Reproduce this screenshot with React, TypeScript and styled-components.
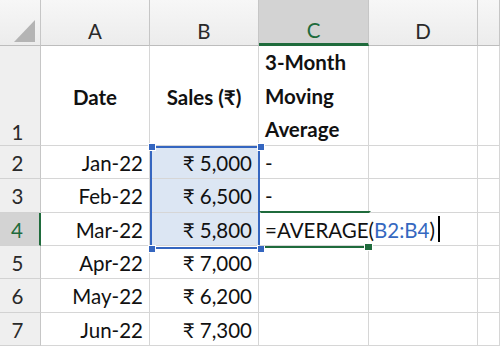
import styled, { createGlobalStyle } from 'styled-components';

const GlobalStyle = createGlobalStyle`
  html, body {
    margin: 0;
    padding: 0;
    background: #ffffff;
  }
  body {
    font-family: Lato, "Noto Sans", "DejaVu Sans", sans-serif;
  }
`;

type Row = {
	date: string
	sales: string
	avg?: string
};

const rows: Row[] = [
	{ date: 'Jan-22', sales: '₹ 5,000', avg: '-' },
	{ date: 'Feb-22', sales: '₹ 6,500', avg: '-' },
	{ date: 'Mar-22', sales: '₹ 5,800' },
	{ date: 'Apr-22', sales: '₹ 7,000' },
	{ date: 'May-22', sales: '₹ 6,200' },
	{ date: 'Jun-22', sales: '₹ 7,300' },
];

const columns = ['A', 'B', 'C', 'D', ''];

export default function App() {
	return (
		<>
			<GlobalStyle/>
			<Sheet>
				<Corner>
					<svg width="41" height="46" viewBox="0 0 41 46">
						<polygon points="14,42 35,42 35,20" fill="#b4b4b4"/>
					</svg>
				</Corner>
				{columns.map((c) => (
					<ColHeader key={c || 'E'} $active={c === 'C'}>{c}</ColHeader>
				))}

				<RowHeader $tall>1</RowHeader>
				<Cell $align="center" $bold>Date</Cell>
				<Cell $align="center" $bold>Sales (₹)</Cell>
				<Cell $bold $wrap>3-Month Moving Average</Cell>
				<Cell/>
				<Cell/>

				{rows.map((r, i) => {
					const n = i + 2;
					const editing = n === 4;
					return [
						<RowHeader key={`h${n}`} $active={editing}>{n}</RowHeader>,
						<Cell key={`a${n}`} $align="right">{r.date}</Cell>,
						<Cell key={`b${n}`} $align="right" $picked={n <= 4}>{r.sales}</Cell>,
						editing ? (
							<Cell key={`c${n}`} $overflow>
								<span>=AVERAGE(<Ref>B2:B4</Ref>)</span>
								<Caret/>
							</Cell>
						) : (
							<Cell key={`c${n}`}>{r.avg}</Cell>
						),
						<Cell key={`d${n}`}/>,
						<Cell key={`e${n}`}/>,
					];
				})}

				<RangeBox/>
				<Handle $x={150} $y={146}/>
				<Handle $x={259} $y={146}/>
				<Handle $x={150} $y={248}/>
				<Handle $x={259} $y={248}/>
				<ActiveBox/>
				<FillHandle/>
			</Sheet>
		</>
	);
}

const Sheet = styled.div`
  position: relative;
  width: 500px;
  height: 346px;
  overflow: hidden;
  display: grid;
  grid-template-columns: 41px 109px 109px 110px 109px 1fr;
  grid-template-rows: 46px 100px repeat(6, 33.33px);
  color: #111;
  font-size: 20.5px;
`;

const Corner = styled.div`
  background: linear-gradient(#f7f7f7, #ececec);
  border-right: 1px solid #c6c6c6;
  border-bottom: 1px solid #bdbdbd;
  box-sizing: border-box;
  svg { display: block; }
`;

const ColHeader = styled.div<{ $active?: boolean }>`
  box-sizing: border-box;
  display: flex;
  align-items: center;
  justify-content: center;
  padding-top: 16px;
  background: ${(p) => (p.$active ? '#d3d3d3' : 'linear-gradient(#f7f7f7, #ececec)')};
  color: ${(p) => (p.$active ? '#1f6b3c' : '#2a2a2a')};
  border-right: 1px solid #c6c6c6;
  border-bottom: ${(p) => (p.$active ? '3px solid #1f6b3c' : '1px solid #bdbdbd')};
`;

const RowHeader = styled.div<{ $active?: boolean; $tall?: boolean }>`
  box-sizing: border-box;
  display: flex;
  align-items: ${(p) => (p.$tall ? 'flex-end' : 'center')};
  justify-content: center;
  padding: ${(p) => (p.$tall ? '0 5px 1px 0' : '2px 5px 0 0')};
  background: ${(p) => (p.$active ? '#d3d3d3' : '#efefef')};
  color: ${(p) => (p.$active ? '#1f6b3c' : '#2a2a2a')};
  border-right: ${(p) => (p.$active ? '2px solid #1f6b3c' : '1px solid #c6c6c6')};
  border-bottom: 1px solid #d2d2d2;
`;

const Cell = styled.div<{
	$align?: 'left' | 'center' | 'right'
	$bold?: boolean
	$wrap?: boolean
	$picked?: boolean
	$overflow?: boolean
}>`
  box-sizing: border-box;
  position: relative;
  display: flex;
  align-items: center;
  justify-content: ${(p) => (p.$align === 'right' ? 'flex-end' : p.$align === 'center' ? 'center' : 'flex-start')};
  padding: 2px 6px 0 6px;
  white-space: ${(p) => (p.$wrap ? 'normal' : 'nowrap')};
  line-height: ${(p) => (p.$wrap ? '33.5px' : 'normal')};
  font-weight: ${(p) => (p.$bold ? 700 : 400)};
  background: ${(p) => (p.$picked ? '#dce6f3' : 'transparent')};
  border-right: ${(p) => (p.$overflow ? 'none' : '1px solid #d6d6d6')};
  border-bottom: 1px solid #d6d6d6;
  overflow: visible;
  z-index: ${(p) => (p.$overflow ? 6 : 0)};
`;

const Ref = styled.span`
  color: #3568bf;
`;

const Caret = styled.span`
  flex: 0 0 2px;
  width: 2px;
  height: 26px;
  margin: 0 0 2px 3px;
  background: #000000;
`;

const RangeBox = styled.div`
  position: absolute;
  left: 150px;
  top: 146px;
  width: 110px;
  height: 103px;
  box-sizing: border-box;
  border: 2px solid #3566c0;
  pointer-events: none;
  z-index: 3;
`;

const Handle = styled.div<{ $x: number; $y: number }>`
  position: absolute;
  left: ${(p) => p.$x - 2}px;
  top: ${(p) => p.$y - 3}px;
  width: 6px;
  height: 6px;
  background: #3566c0;
  border: 1px solid #ffffff;
  z-index: 5;
`;

const ActiveBox = styled.div`
  position: absolute;
  left: 259px;
  top: 211px;
  width: 112px;
  height: 37px;
  box-sizing: border-box;
  border: 2px solid #1f6b3c;
  border-left-color: transparent;
  border-right-color: transparent;
  pointer-events: none;
  z-index: 4;
`;

const FillHandle = styled.div`
  position: absolute;
  left: 364px;
  top: 243px;
  width: 7px;
  height: 6px;
  background: #1f6b3c;
  border: 1px solid #ffffff;
  z-index: 7;
`;
